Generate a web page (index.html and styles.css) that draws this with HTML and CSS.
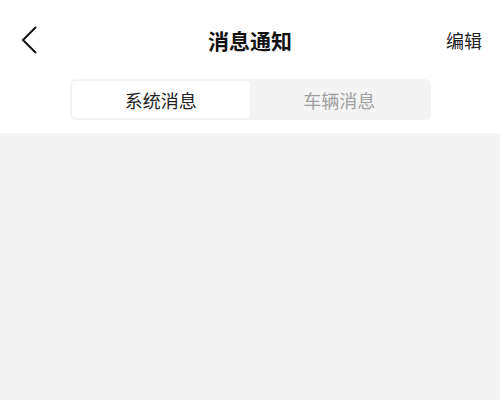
FILE: index.html
```html
<!DOCTYPE html>
<html lang="zh-CN">
<head>
<meta charset="utf-8">
<title>消息通知</title>
<link rel="stylesheet" href="styles.css">
</head>
<body>
<div class="page">
  <div class="top">
    <header class="header">
      <div class="back">
        <svg width="20" height="30" viewBox="0 0 20 30"><path d="M16 2 L3 15 L16 28" fill="none" stroke="#111" stroke-width="2"/></svg>
      </div>
      <h1 class="title">消息通知</h1>
      <div class="edit">编辑</div>
    </header>
    <div class="segment">
      <div class="tab active">系统消息</div>
      <div class="tab">车辆消息</div>
    </div>
  </div>
  <main class="content"></main>
</div>
</body>
</html>
```

FILE: styles.css
```css
html, body {
  margin: 0;
  padding: 0;
  height: 100%;
}
body {
  font-family: "Noto Sans CJK SC", "Noto Sans", sans-serif;
  background: #f4f4f4;
}
.page {
  display: flex;
  flex-direction: column;
  min-height: 100%;
}
.top {
  background: #fff;
  padding-bottom: 13px;
}
.header {
  height: 79px;
  display: flex;
  align-items: center;
  justify-content: space-between;
  padding: 0 18px 0 20px;
  position: relative;
}
.back {
  width: 20px;
  height: 30px;
  display: flex;
}
.title {
  position: absolute;
  left: 0;
  right: 0;
  text-align: center;
  margin: 0;
  font-size: 21px;
  font-weight: 700;
  color: #111;
  pointer-events: none;
}
.edit {
  font-size: 18px;
  color: #222;
}
.segment {
  width: 357px;
  margin: 0 auto;
  display: flex;
  background: #f4f4f4;
  border-radius: 6px;
  padding: 2px;
  height: 37px;
}
.tab {
  flex: 1;
  display: flex;
  align-items: center;
  justify-content: center;
  font-size: 18px;
  color: #a0a0a0;
  border-radius: 4px;
}
.tab.active {
  background: #fff;
  color: #222;
}
.content {
  flex: 1;
  background: #f4f4f4;
}
```
